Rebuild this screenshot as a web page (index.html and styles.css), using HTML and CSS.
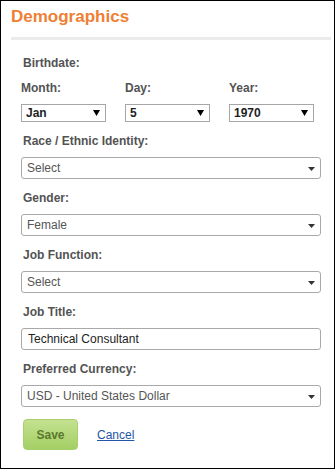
FILE: index.html
```html
<!DOCTYPE html>
<html lang="en">
<head>
  <meta charset="UTF-8">
  <meta name="viewport" content="width=device-width, initial-scale=1.0">
  <title>Demographics</title>
  <link rel="stylesheet" href="styles.css">
</head>
<body>
  <div class="panel">
    <div class="panel-head">
      <h2 class="title">Demographics</h2>
    </div>

    <form class="form" action="#" method="POST">
      <div class="label">Birthdate:</div>
      <div class="date-row">
        <div class="date-col">
          <label class="date-label" for="month">Month:</label>
          <div class="pick small">
            <select id="month" name="month">
              <option>Jan</option>
              <option>Feb</option>
              <option>Mar</option>
            </select>
          </div>
        </div>
        <div class="date-col">
          <label class="date-label" for="day">Day:</label>
          <div class="pick small">
            <select id="day" name="day">
              <option>5</option>
            </select>
          </div>
        </div>
        <div class="date-col">
          <label class="date-label" for="year">Year:</label>
          <div class="pick small">
            <select id="year" name="year">
              <option>1970</option>
            </select>
          </div>
        </div>
      </div>

      <div class="field">
        <label class="label" for="race">Race / Ethnic Identity:</label>
        <div class="pick">
          <select id="race" name="race">
            <option>Select</option>
          </select>
        </div>
      </div>

      <div class="field">
        <label class="label" for="gender">Gender:</label>
        <div class="pick">
          <select id="gender" name="gender">
            <option>Female</option>
            <option>Male</option>
          </select>
        </div>
      </div>

      <div class="field">
        <label class="label" for="jobfunction">Job Function:</label>
        <div class="pick">
          <select id="jobfunction" name="jobfunction">
            <option>Select</option>
          </select>
        </div>
      </div>

      <div class="field">
        <label class="label" for="jobtitle">Job Title:</label>
        <input type="text" id="jobtitle" name="jobtitle" class="text-input" value="Technical Consultant">
      </div>

      <div class="field">
        <label class="label" for="currency">Preferred Currency:</label>
        <div class="pick">
          <select id="currency" name="currency">
            <option>USD - United States Dollar</option>
          </select>
        </div>
      </div>

      <div class="actions">
        <button type="submit" class="save-btn">Save</button>
        <a href="#" class="cancel-link">Cancel</a>
      </div>
    </form>
  </div>
</body>
</html>
```

FILE: styles.css
```css
* {
  box-sizing: border-box;
}

body {
  margin: 0;
  padding: 0;
  font-family: "Liberation Sans", Arial, sans-serif;
  background-color: #fff;
}

.panel {
  width: 335px;
  height: 469px;
  border: 1px solid #000;
  background: #fff;
  overflow: hidden;
}

.panel-head {
  width: 320px;
  margin-left: 10px;
  padding-top: 6px;
  padding-bottom: 10px;
  border-bottom: 3px solid #ebebeb;
}

.title {
  margin: 0;
  font-size: 17px;
  line-height: 20px;
  font-weight: bold;
  color: #ee7f34;
}

.form {
  padding: 16px 0 0 20px;
  width: 320px;
}

.label {
  display: block;
  padding-left: 2px;
  font-size: 12px;
  line-height: 15px;
  font-weight: bold;
  color: #535353;
}

.date-row {
  display: flex;
  gap: 19px;
  margin-top: 10px;
  margin-bottom: 12px;
}

.date-col {
  width: 85px;
}

.date-label {
  display: block;
  font-size: 12px;
  line-height: 15px;
  font-weight: bold;
  color: #535353;
  margin-bottom: 8px;
}

.field {
  margin-bottom: 12px;
}

.field .label {
  margin-bottom: 8px;
}

.pick {
  position: relative;
  width: 300px;
}

.pick select {
  -webkit-appearance: none;
  appearance: none;
  display: block;
  width: 100%;
  height: 22px;
  margin: 0;
  padding: 0 20px 0 5px;
  border: 1px solid #a9a9a9;
  border-radius: 3px;
  background: #fff;
  font-family: "Liberation Sans", Arial, sans-serif;
  font-size: 12px;
  color: #555;
  outline: none;
}

.pick::after {
  content: "";
  position: absolute;
  right: 6px;
  top: 10px;
  width: 7px;
  height: 4px;
  background: #333;
  clip-path: polygon(0 0, 100% 0, 50% 100%);
  pointer-events: none;
}

/* birthdate pickers: square box, border drawn on the wrapper */
.pick.small {
  width: 85px;
  height: 18px;
  border: 1px solid #a6a6a6;
}

.pick.small select {
  height: 16px;
  border: none;
  border-radius: 0;
  padding-left: 4px;
  font-weight: bold;
  color: #1e1e1e;
}

.pick.small::after {
  right: 5px;
  top: 5px;
  width: 7px;
  height: 6px;
  background: #000;
}

.text-input {
  display: block;
  width: 300px;
  height: 22px;
  margin: 0;
  padding: 0 6px;
  border: 1px solid #a9a9a9;
  border-radius: 3px;
  font-family: "Liberation Sans", Arial, sans-serif;
  font-size: 12px;
  color: #222;
  outline: none;
}

.actions {
  display: flex;
  align-items: center;
  gap: 19px;
  margin-top: 7px;
  padding-left: 2px;
}

.save-btn {
  width: 55px;
  height: 31px;
  padding: 0;
  border: 1px solid #a7d06c;
  border-radius: 4px;
  background: linear-gradient(#c4e191, #a3cf63);
  font-family: "Liberation Sans", Arial, sans-serif;
  font-size: 12px;
  font-weight: bold;
  color: #5b782c;
  cursor: pointer;
}

.cancel-link {
  font-size: 12px;
  color: #2356a6;
  text-decoration: underline;
}
```
